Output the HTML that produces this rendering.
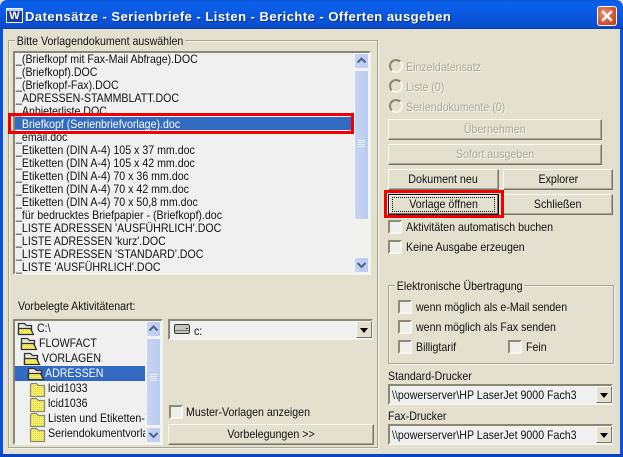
<!DOCTYPE html>
<html><head><meta charset="utf-8"><style>
html,body{margin:0;padding:0;background:#E3E0CF}
#w{position:relative;width:623px;height:457px;overflow:hidden;background:#E3E0CF;font:12px "Liberation Sans",sans-serif;color:#111}
#w div,#w svg{position:absolute;box-sizing:border-box}
.t{white-space:nowrap;line-height:14px;height:14px;transform:scaleX(.885);transform-origin:0 50%}
.d{color:#ABA998;text-shadow:1px 1px 0 #f6f5ec}
.g{border:1px solid #A6A593;box-shadow:inset 1px 1px 0 #f4f3e9,1px 1px 0 #f4f3e9}
.leg{background:#E3E0CF;padding:0 2px}
.in{background:#F0F0F0;border:2px solid;border-color:#8A8875 #F5F4EA #F5F4EA #8A8875}
.b{background:#E3E0CF;border:1px solid;border-color:#F8F7F0 #77766A #77766A #F8F7F0;text-align:center;line-height:18px;box-shadow:inset -1px -1px 0 #A9A793}
.b span{display:inline-block;transform:scaleX(.89)}
.c{width:14px;height:14px;background:#EFEFEA;border:2px solid;border-color:#8D8B78 #F7F6EE #F7F6EE #8D8B78}
.r{width:14px;height:14px;border-radius:50%;border:2px solid;border-color:#8A8875 #F5F4EA #F5F4EA #8A8875;background:#E3E0CF}
.sb{background:#F1F1ED}
.sbb{background:linear-gradient(90deg,#C6D5F1,#B9CCEF);border:1px solid #F1F4FB;border-radius:2px}
.dd{width:16px;background:#E3E0CF;border:1px solid;border-color:#F8F7F0 #77766A #77766A #F8F7F0}
.dd:after{content:"";position:absolute;left:3px;top:6px;border:4px solid transparent;border-top:5px solid #000;border-bottom:0}
.red{border:3px solid #F00000}
</style></head><body><div id="w">

<!-- title bar -->
<div style="left:0;top:0;width:623px;height:29px;border-radius:7px 7px 0 0;background:linear-gradient(180deg,#0A57D6 0,#0A5FEA 3px,#0B5EE6 8px,#0A53D8 20px,#0A4ED0 26px,#0A3EAB 29px)"></div>
<div style="left:6px;top:8px;width:17px;height:15px;background:#1B3C9E;border:1px solid #F0F4FF"></div>
<div style="left:7px;top:9px;width:15px;height:2px;background:#BFD0F5"></div>
<div style="left:7px;top:11px;width:15px;height:11px;line-height:11px;text-align:center;font:bold 11px/11px 'Liberation Sans',sans-serif;color:#fff">W</div>
<div style="left:25px;top:9px;height:16px;white-space:nowrap;font:bold 13px/16px 'Liberation Sans',sans-serif;color:#fff;text-shadow:1px 1px 0 #0A2F96;letter-spacing:.48px">Datensätze - Serienbriefe - Listen - Berichte - Offerten ausgeben</div>
<div style="left:597px;top:6px;width:20px;height:20px;border:1px solid #fff;border-radius:3px;background:radial-gradient(circle at 35% 35%,#E8907A,#CF4A28 70%,#B93A1D)"></div>
<svg style="left:597px;top:6px" width="20" height="20"><path d="M6 6L14 14M14 6L6 14" stroke="#fff" stroke-width="2.4" stroke-linecap="square"/></svg>

<!-- window borders -->
<div style="left:0;top:29px;width:3px;height:428px;background:#0A50D8"></div>
<div style="left:620px;top:29px;width:3px;height:428px;background:#0A50D8"></div>
<div style="left:0;top:454px;width:623px;height:3px;background:#0A45C0"></div>

<!-- main group -->
<div class="g" style="left:8px;top:40px;width:370px;height:408px"></div>
<div class="t leg" style="left:15px;top:34px">Bitte Vorlagendokument auswählen</div>

<!-- file list -->
<div class="in" style="left:13px;top:51px;width:358px;height:224px"></div>
<div class="t" style="left:16px;top:52px">_(Briefkopf mit Fax-Mail Abfrage).DOC</div>
<div class="t" style="left:16px;top:65px">_(Briefkopf).DOC</div>
<div class="t" style="left:16px;top:78px">_(Briefkopf-Fax).DOC</div>
<div class="t" style="left:16px;top:91px">_ADRESSEN-STAMMBLATT.DOC</div>
<div class="t" style="left:16px;top:104px">_Anbieterliste.DOC</div>
<div style="left:15px;top:117px;width:338px;height:13px;background:#316AC0"></div>
<div class="t" style="left:16px;top:117px;color:#fff">_Briefkopf (Serienbriefvorlage).doc</div>
<div class="t" style="left:16px;top:130px">_email.doc</div>
<div class="t" style="left:16px;top:143px">_Etiketten (DIN A-4) 105 x 37 mm.doc</div>
<div class="t" style="left:16px;top:156px">_Etiketten (DIN A-4) 105 x 42 mm.doc</div>
<div class="t" style="left:16px;top:169px">_Etiketten (DIN A-4) 70 x 36 mm.doc</div>
<div class="t" style="left:16px;top:182px">_Etiketten (DIN A-4) 70 x 42 mm.doc</div>
<div class="t" style="left:16px;top:195px">_Etiketten (DIN A-4) 70 x 50,8 mm.doc</div>
<div class="t" style="left:16px;top:208px">_für bedrucktes Briefpapier - (Briefkopf).doc</div>
<div class="t" style="left:16px;top:221px">_LISTE ADRESSEN 'AUSFÜHRLICH'.DOC</div>
<div class="t" style="left:16px;top:234px">_LISTE ADRESSEN 'kurz'.DOC</div>
<div class="t" style="left:16px;top:247px">_LISTE ADRESSEN 'STANDARD'.DOC</div>
<div class="t" style="left:16px;top:260px">_LISTE 'AUSFÜHRLICH'.DOC</div>
<div class="red" style="left:8px;top:113px;width:346px;height:21px"></div>

<!-- list scrollbar -->
<div class="sb" style="left:354px;top:53px;width:15px;height:220px"></div>
<div class="sbb" style="left:354px;top:53px;width:15px;height:16px"></div>
<svg style="left:354px;top:53px" width="15" height="16"><path d="M3.500 9.500L7.500 5.500L11.500 9.500" fill="none" stroke="#4D6185" stroke-width="2"/></svg>
<div class="sbb" style="left:354px;top:70px;width:15px;height:150px"></div>
<svg style="left:354px;top:70px" width="15" height="150"><path d="M4 70.500H11M4 72.500H11M4 74.500H11M4 76.500H11" stroke="#E9EEFB" stroke-width="1"/></svg>
<div class="sbb" style="left:354px;top:257px;width:15px;height:16px"></div>
<svg style="left:354px;top:257px" width="15" height="16"><path d="M3.500 6L7.500 10L11.500 6" fill="none" stroke="#4D6185" stroke-width="2"/></svg>

<!-- activity / tree -->
<div class="t" style="left:18px;top:299px">Vorbelegte Aktivitätenart:</div>
<div class="in" style="left:13px;top:319px;width:150px;height:126px"></div>
<div style="left:15px;top:366px;width:130px;height:15px;background:#316AC0"></div>
<svg style="left:15px;top:321px" width="131" height="123">
<defs><pattern id="y" width="2" height="2" patternUnits="userSpaceOnUse"><rect width="2" height="2" fill="#F4F060"/><rect width="1" height="1" fill="#D8D45E"/></pattern></defs>
<g stroke="#333" stroke-width="1.300" fill="url(#y)">
<path d="M3.500 6.500V2.500H9.500L11.500 4.500H16.500V12.500H3.500Z" fill="#e8e7dc"/><path d="M3.500 13.500L3.500 7.500H15.500L18.500 13.500Z"/>
<path d="M6.500 21.500V17.500H12.500L14.500 19.500H19.500V27.500H6.500Z" fill="#e8e7dc"/><path d="M6.500 28.500L6.500 22.500H18.500L21.500 28.500Z"/>
<path d="M9.500 36.500V32.500H15.500L17.500 34.500H22.500V42.500H9.500Z" fill="#e8e7dc"/><path d="M9.500 43.500L9.500 37.500H21.500L24.500 43.500Z"/>
<path d="M13.500 51.500V47.500H19.500L21.500 49.500H26.500V57.500H13.500Z" fill="#e8e7dc"/><path d="M13.500 58.500L13.500 52.500H25.500L28.500 58.500Z"/>
</g>
<g stroke="#8A8A7A" stroke-width="1.200" fill="url(#y)">
<path d="M15.500 63.500L16.500 62.500H21.500L23.500 64.500H29.500V75.500H15.500Z"/>
<path d="M15.500 78.500L16.500 77.500H21.500L23.500 79.500H29.500V90.500H15.500Z"/>
<path d="M15.500 93.500L16.500 92.500H21.500L23.500 94.500H29.500V105.500H15.500Z"/>
<path d="M15.500 108.500L16.500 107.500H21.500L23.500 109.500H29.500V120.500H15.500Z"/>
</g></svg>
<div class="t" style="left:37px;top:321px">C:\</div>
<div class="t" style="left:39px;top:336px">FLOWFACT</div>
<div class="t" style="left:42px;top:351px">VORLAGEN</div>
<div class="t" style="left:45px;top:366px;color:#fff">ADRESSEN</div>
<div class="t" style="left:48px;top:381px">lcid1033</div>
<div class="t" style="left:48px;top:396px">lcid1036</div>
<div class="t" style="left:48px;top:411px;width:110px;overflow:hidden">Listen und Etiketten-V</div>
<div class="t" style="left:48px;top:426px;width:110px;overflow:hidden">Seriendokumentvorlagen</div>
<div class="sb" style="left:146px;top:321px;width:15px;height:122px"></div>
<div class="sbb" style="left:146px;top:321px;width:15px;height:16px"></div>
<svg style="left:146px;top:321px" width="15" height="16"><path d="M3.500 9.500L7.500 5.500L11.500 9.500" fill="none" stroke="#4D6185" stroke-width="2"/></svg>
<div class="sbb" style="left:146px;top:338px;width:15px;height:88px"></div>
<svg style="left:146px;top:338px" width="15" height="88"><path d="M4 36.500H11M4 38.500H11M4 40.500H11M4 42.500H11" stroke="#E9EEFB" stroke-width="1"/></svg>
<div class="sbb" style="left:146px;top:427px;width:15px;height:16px"></div>
<svg style="left:146px;top:427px" width="15" height="16"><path d="M3.500 6L7.500 10L11.500 6" fill="none" stroke="#4D6185" stroke-width="2"/></svg>

<!-- drive combo -->
<div class="in" style="left:168px;top:319px;width:205px;height:21px"></div>
<svg style="left:173px;top:323px" width="18" height="12"><path d="M1.500 3.500Q1.500 1.500 3.500 1.500H14.500Q16.500 1.500 16.500 3.500V8.500Q16.500 10.500 14.500 10.500H3.500Q1.500 10.500 1.500 8.500Z" fill="#C4C4BE" stroke="#333"/><path d="M2 7.500H16" stroke="#777"/><path d="M13 5.500H15" stroke="#333"/></svg>
<div class="t" style="left:194px;top:324px">c:</div>
<div class="dd" style="left:356px;top:321px;height:17px"></div>

<div class="c" style="left:169px;top:405px"></div>
<div class="t" style="left:186px;top:405px">Muster-Vorlagen anzeigen</div>
<div class="b" style="left:168px;top:424px;width:206px;height:21px"><span>Vorbelegungen &gt;&gt;</span></div>

<!-- radios -->
<div class="r" style="left:389px;top:59px"></div>
<div class="t d" style="left:406px;top:60px">Einzeldatensatz</div>
<div class="r" style="left:389px;top:79px"></div>
<div class="t d" style="left:406px;top:80px">Liste (0)</div>
<div class="r" style="left:389px;top:99px"></div>
<div class="t d" style="left:406px;top:100px">Seriendokumente (0)</div>

<!-- buttons -->
<div class="b d" style="left:388px;top:119px;width:214px;height:21px"><span>Übernehmen</span></div>
<div class="b d" style="left:388px;top:144px;width:214px;height:21px"><span>Sofort ausgeben</span></div>
<div class="b" style="left:388px;top:169px;width:111px;height:21px"><span>Dokument neu</span></div>
<div class="b" style="left:503px;top:169px;width:110px;height:21px"><span>Explorer</span></div>
<div class="b" style="left:388px;top:194px;width:111px;height:21px;border:1px solid #000;box-shadow:inset -1px -1px 0 #77766A,inset 1px 1px 0 #f8f7f0"><span>Vorlage öffnen</span></div>
<div style="left:392px;top:197px;width:103px;height:15px;border:1px dotted #000"></div>
<div class="b" style="left:503px;top:194px;width:110px;height:21px"><span>Schließen</span></div>
<div class="red" style="left:384px;top:190px;width:120px;height:28px"></div>

<div class="c" style="left:388px;top:220px"></div>
<div class="t" style="left:406px;top:220px">Aktivitäten automatisch buchen</div>
<div class="c" style="left:388px;top:240px"></div>
<div class="t" style="left:406px;top:240px">Keine Ausgabe erzeugen</div>

<!-- transfer group -->
<div class="g" style="left:388px;top:285px;width:226px;height:79px"></div>
<div class="t leg" style="left:395px;top:279px">Elektronische Übertragung</div>
<div class="c" style="left:398px;top:300px"></div>
<div class="t" style="left:416px;top:300px">wenn möglich als e-Mail senden</div>
<div class="c" style="left:398px;top:320px"></div>
<div class="t" style="left:416px;top:320px">wenn möglich als Fax senden</div>
<div class="c" style="left:398px;top:340px"></div>
<div class="t" style="left:416px;top:340px">Billigtarif</div>
<div class="c" style="left:508px;top:340px"></div>
<div class="t" style="left:526px;top:340px">Fein</div>

<div class="t" style="left:388px;top:369px">Standard-Drucker</div>
<div class="in" style="left:388px;top:384px;width:225px;height:21px"></div>
<div class="t" style="left:392px;top:388px">\\powerserver\HP LaserJet 9000 Fach3</div>
<div class="dd" style="left:596px;top:386px;height:17px"></div>
<div class="t" style="left:388px;top:409px">Fax-Drucker</div>
<div class="in" style="left:388px;top:424px;width:225px;height:21px"></div>
<div class="t" style="left:392px;top:428px">\\powerserver\HP LaserJet 9000 Fach3</div>
<div class="dd" style="left:596px;top:426px;height:17px"></div>

</div></body></html>
